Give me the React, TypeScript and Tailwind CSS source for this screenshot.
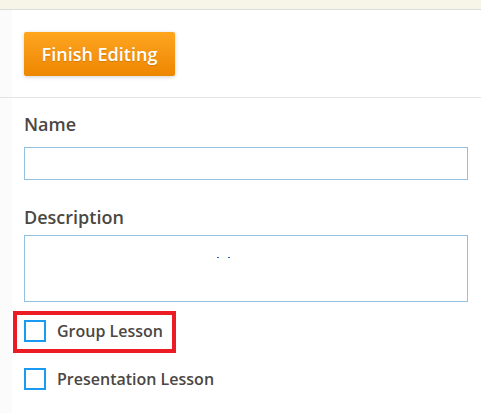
import React from "react";

const Checkbox = () => (
  <span className="block w-[22px] h-[22px] shrink-0 border-2 border-[#1a9bf0] bg-white" />
);

const App = () => {
  return (
    <div className="w-[481px] h-[413px] overflow-hidden bg-[linear-gradient(to_right,#fbfbfb_12px,#ffffff_12px)] font-['Open_Sans',sans-serif]">
      <div className="h-[10px] bg-[#f7f4e8] border-b border-[#dcdcdc]" />

      <div className="pl-[24px] pt-[22px] pb-[21px] border-b border-[#e4e4e4]">
        <button className="w-[151px] h-[44px] rounded-[2px] bg-gradient-to-b from-[#fea51e] to-[#ee8600] text-white text-[18px] font-semibold shadow-[0_1px_4px_rgba(0,0,0,0.18)] [text-shadow:0_1px_1px_rgba(0,0,0,0.15)]">
          Finish Editing
        </button>
      </div>

      <div className="pl-[24px] pr-[13px] pt-[14px]">
        <label className="block text-[18px] leading-[24px] font-semibold text-[#4b4743]">Name</label>
        <input className="mt-[11px] block w-full h-[33px] border border-[#93c1e2] bg-white outline-none" />

        <label className="mt-[25px] block text-[18px] leading-[24px] font-semibold text-[#4b4743]">Description</label>
        <div className="mt-[6px] h-[67px] border border-[#93c1e2] bg-white pl-[192px] pt-[21px] flex gap-[9px]">
          <span className="block w-[2px] h-[1px] bg-[#1565d8]" />
          <span className="block w-[2px] h-[1px] bg-[#1565d8]" />
        </div>

        <div className="mt-[9px] -ml-[11px] w-[163px] h-[42px] border-4 border-[#ec1c24] flex items-start pl-[7px] pt-[5px]">
          <Checkbox />
          <span className="ml-[11px] text-[16px] leading-[22px] font-semibold text-[#4b4743]">Group Lesson</span>
        </div>

        <div className="mt-[15px] flex items-start">
          <Checkbox />
          <span className="ml-[11px] text-[16px] leading-[22px] font-semibold text-[#4b4743]">Presentation Lesson</span>
        </div>
      </div>
    </div>
  );
};

export default App;
